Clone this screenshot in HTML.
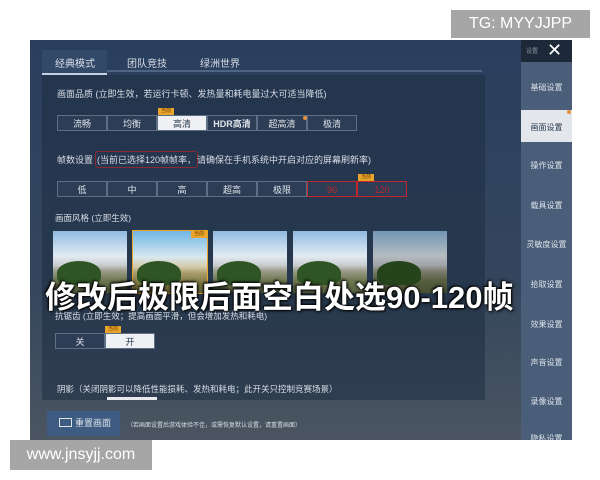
<!DOCTYPE html>
<html><head><meta charset="utf-8"><style>
body{margin:0;width:600px;height:480px;background:#fff;position:relative;overflow:hidden;font-family:"Liberation Sans","Noto Sans CJK SC",sans-serif;}
.a{position:absolute}
#scr{left:30px;top:40px;width:542px;height:400px;background:linear-gradient(180deg,#2b4160 0%,#33475f 40%,#3c4a5a 75%,#4a5561 100%);overflow:hidden}
.t{color:#d8dde6;font-size:9px;white-space:nowrap}
.btn{position:absolute;height:16px;border:1px solid #5d6f86;background:#2c3d55;color:#dfe4ea;font-size:9px;text-align:center;line-height:16px;box-sizing:border-box}
.on{background:#eef0f3;color:#2a3a50}
.red{border:1px solid #c0262c;color:#c0262c}
.side{position:absolute;left:491px;width:51px;color:#dfe4ea;font-size:8px;text-align:center}
.img{position:absolute;top:191px;width:74px;height:62px;background:linear-gradient(180deg,#8fbbe2 0%,#e2ebf2 40%,#c9cdd0 55%,#9a9a88 65%,#6d7650 80%,#5a6440 100%)}
.tree{position:absolute;left:4px;top:30px;width:44px;height:24px;border-radius:50% 50% 30% 30%;background:#2e5523}
.tag{position:absolute;background:#e9a42b;color:#6a3b00;font-size:5px;height:7px;line-height:7px;padding:0 3px}
</style></head><body>
<div class="a" style="left:451px;top:10px;width:139px;height:28px;background:#a6a6a6;color:#fff;font-size:16px;line-height:28px;text-align:center">TG: MYYJJPP</div>
<div class="a" id="scr">
 <div class="a" style="left:0;top:0;width:491px;height:400px;background:linear-gradient(180deg,#2a3f5e,#34465d 60%,#4b5561)"></div>
 <div class="a" style="left:12px;top:35px;width:443px;height:325px;background:rgba(30,45,65,.55)"></div>
 <div class="a" style="left:12px;top:30px;width:440px;height:2px;background:#4f6582"></div>
 <div class="a" style="left:12px;top:10px;width:65px;height:23px;background:#33496a;border-bottom:2px solid #c8d2de"></div>
 <div class="a t" style="left:25px;top:15px;font-size:10px">经典模式</div>
 <div class="a t" style="left:97px;top:15px;font-size:10px">团队竞技</div>
 <div class="a t" style="left:170px;top:15px;font-size:10px">绿洲世界</div>
 <div class="a t" style="left:27px;top:47px">画面品质 (立即生效，若运行卡顿、发热量和耗电量过大可适当降低)</div>
 <div class="btn" style="left:27px;top:75px;width:50px">流畅</div>
 <div class="btn" style="left:77px;top:75px;width:50px">均衡</div>
 <div class="btn on" style="left:127px;top:75px;width:50px">高清</div>
 <div class="tag" style="left:128px;top:68px">当前</div>
 <div class="btn" style="left:177px;top:75px;width:50px;font-weight:bold">HDR高清</div>
 <div class="btn" style="left:227px;top:75px;width:50px">超高清</div>
 <div class="a" style="left:273px;top:76px;width:4px;height:4px;border-radius:2px;background:#e8903a"></div>
 <div class="btn" style="left:277px;top:75px;width:50px">极清</div>
 <div class="a t" style="left:27px;top:113px">帧数设置</div>
 <div class="a t" style="left:65px;top:111px;border:1px solid #8a2a35;border-radius:3px;padding:1px 1px">(当前已选择120帧帧率，</div>
 <div class="a t" style="left:167px;top:113px">请确保在手机系统中开启对应的屏幕刷新率)</div>
 <div class="btn" style="left:27px;top:141px;width:50px">低</div>
 <div class="btn" style="left:77px;top:141px;width:50px">中</div>
 <div class="btn" style="left:127px;top:141px;width:50px">高</div>
 <div class="btn" style="left:177px;top:141px;width:50px">超高</div>
 <div class="btn" style="left:227px;top:141px;width:50px">极限</div>
 <div class="btn red" style="left:277px;top:141px;width:50px">90</div>
 <div class="btn red" style="left:327px;top:141px;width:50px">120</div>
 <div class="tag" style="left:328px;top:134px">当前</div>
 <div class="a t" style="left:25px;top:172px;font-size:8.5px">画面风格 (立即生效)</div>
 <div class="img" style="left:23px"><div class="tree"></div></div>
 <div class="img" style="left:103px;background:linear-gradient(180deg,#6fb5e6 0%,#d7e8ef 42%,#d2c9a8 58%,#a89b6a 68%,#7a7840 85%,#6a6535 100%);outline:1px solid #e9a42b"><div class="tree"></div><div class="tag" style="right:0;top:0">当前</div></div>
 <div class="img" style="left:183px"><div class="tree"></div></div>
 <div class="img" style="left:263px"><div class="tree"></div></div>
 <div class="img" style="left:343px;filter:brightness(.8)"><div class="tree"></div></div>
 <div class="a" style="left:15px;top:232px;color:#fff;font-size:31px;font-weight:bold;white-space:nowrap;text-shadow:1px 1px 2px #000,-1px -1px 2px #000,0 0 4px #222">修改后极限后面空白处选90-120帧</div>
 <div class="a t" style="left:25px;top:270px;font-size:8.5px">抗锯齿 (立即生效；提高画面平滑，但会增加发热和耗电)</div>
 <div class="btn" style="left:25px;top:293px;width:50px">关</div>
 <div class="btn on" style="left:75px;top:293px;width:50px">开</div>
 <div class="tag" style="left:75px;top:286px">当前</div>
 <div class="a t" style="left:27px;top:343px;font-size:8.5px">阴影（关闭阴影可以降低性能损耗、发热和耗电；此开关只控制竞赛场景）</div>
 <div class="a" style="left:77px;top:357px;width:50px;height:3px;background:#e6e9ee"></div>
 <div class="a" style="left:17px;top:371px;width:73px;height:25px;background:#3e5b82;color:#dfe4ea;font-size:9px;line-height:25px"><span style="display:inline-block;width:11px;height:7px;border:1.5px solid #dfe4ea;margin:0 3px 0 12px;vertical-align:-1px"></span>重置画面</div>
 <div class="a t" style="left:97px;top:380px;font-size:6px">（若画面设置后游戏体验不佳，或需恢复默认设置，请重置画面）</div>
 <div class="a" style="left:491px;top:0;width:51px;height:400px;background:#4a5e79"></div>
 <div class="a" style="left:491px;top:0;width:51px;height:22px;background:#1d2838"></div>
 <div class="a" style="left:496px;top:6px;color:#8a94a2;font-size:6px">设置</div>
 <div class="a" style="left:517px;top:0px;color:#fff;font-size:18px;line-height:20px">✕</div>
 <div class="a" style="left:491px;top:70px;width:51px;height:32px;background:#e3e6ea"></div>
 <div class="a" style="left:537px;top:70px;width:4px;height:4px;border-radius:2px;background:#e8903a"></div>
 <div class="side" style="top:42px">基础设置</div>
 <div class="side" style="top:82px;color:#2a3a50">画面设置</div>
 <div class="side" style="top:120px">操作设置</div>
 <div class="side" style="top:160px">载具设置</div>
 <div class="side" style="top:199px">灵敏度设置</div>
 <div class="side" style="top:239px">拾取设置</div>
 <div class="side" style="top:279px">效果设置</div>
 <div class="side" style="top:317px">声音设置</div>
 <div class="side" style="top:356px">录像设置</div>
 <div class="side" style="top:393px">隐私设置</div>
</div>
<div class="a" style="left:10px;top:440px;width:142px;height:30px;background:#a6a6a6;color:#fff;font-size:16px;line-height:30px;text-align:center">www.jnsyjj.com</div>
</body></html>
